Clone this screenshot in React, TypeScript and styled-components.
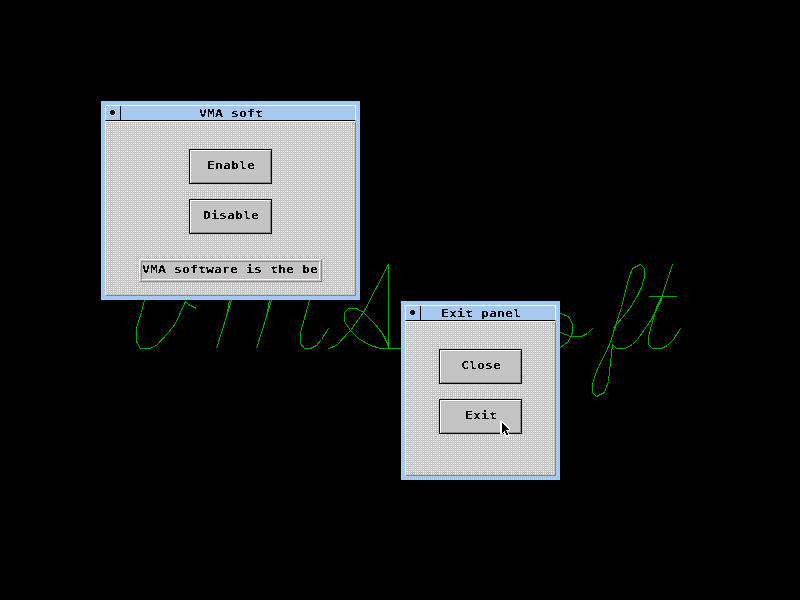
import React from "react";
import styled, { createGlobalStyle } from "styled-components";

const Global = createGlobalStyle`
  * { box-sizing: border-box; }
  body { margin: 0; background: #000; overflow: hidden; }
`;

const Desktop = styled.main`
  position: relative;
  width: 800px;
  height: 600px;
  background: #000;
  color: #000;
  font: bold 10px/12px "DejaVu Sans Mono", monospace;
  cursor: default;
`;

const Wallpaper = styled.svg`
  position: absolute;
  inset: 0;
  fill: none;
  stroke: #00aa00;
  shape-rendering: crispEdges;
`;

const Window = styled.section<{ $x: number; $y: number; $w: number; $h: number }>`
  position: absolute;
  left: ${(p) => p.$x}px;
  top: ${(p) => p.$y}px;
  width: ${(p) => p.$w}px;
  height: ${(p) => p.$h}px;
  padding: 4px;
  background: #a4caf2;
  display: flex;
  flex-direction: column;
`;

const TitleBar = styled.header`
  height: 16px;
  flex: none;
  display: flex;
  border: 1px solid #fff;
  border-bottom: 1px solid #000;
`;

const SystemButton = styled.button`
  width: 15px;
  padding: 4px 0 0 4px;
  border: 0;
  border-right: 1px solid #000;
  background: none;
  display: flex;
  align-items: flex-start;
`;

const Title = styled.h1`
  flex: 1;
  margin: 0 0 0 -14px;
  padding-top: 2px;
  font: inherit;
  display: flex;
  justify-content: center;
`;

const Body = styled.div`
  flex: 1;
  display: flex;
  flex-direction: column;
  align-items: center;
  padding-top: 27px;
  border: 1px solid #fff;
  border-right-color: #868686;
  border-bottom-color: #868686;
  background: conic-gradient(#c3c3c3 25%, #fff 0 50%, #c3c3c3 0) 0 0 / 2px 2px;
`;

const PushButton = styled.button`
  width: 83px;
  height: 35px;
  margin-bottom: 15px;
  padding: 0 0 2px 1px;
  border: 1px solid #000;
  background: #c3c3c3;
  box-shadow: inset 1px 1px #fff, inset -1px -1px #868686;
  color: #000;
  font: inherit;
  display: flex;
  align-items: center;
  justify-content: center;
`;

const Field = styled.div`
  width: 183px;
  height: 23px;
  margin: 10px 0 0;
  padding: 1px;
  border: 1px solid #fff;
  border-right-color: #868686;
  border-bottom-color: #868686;
  background: #c3c3c3;
`;

const FieldText = styled.div`
  height: 19px;
  padding: 2px 0 0;
  border: 1px solid #868686;
  border-right-color: #fff;
  border-bottom-color: #fff;
  display: flex;
`;

const Glyphs = styled.span<{ $fromLeft?: boolean }>`
  display: block;
  white-space: pre;
  transform: scaleX(1.329);
  transform-origin: ${(p) => (p.$fromLeft ? "left" : "center")};
  filter: url(#crisp);
`;

const Pointer = styled.svg`
  position: absolute;
  left: 500px;
  top: 421px;
  shape-rendering: crispEdges;
`;

function Panel(props: {
  title: string; x: number; y: number; w: number; h: number; children: React.ReactNode;
}) {
  return (
    <Window $x={props.x} $y={props.y} $w={props.w} $h={props.h}>
      <TitleBar>
        <SystemButton aria-label="Window menu">
          <svg width="5" height="5" shapeRendering="crispEdges">
            <path d="M1 0h3v1h1v3h-1v1h-3v-1h-1v-3h1z" />
          </svg>
        </SystemButton>
        <Title><Glyphs>{props.title}</Glyphs></Title>
      </TitleBar>
      <Body>{props.children}</Body>
    </Window>
  );
}

const strokes = [
  "144,300 141,312 136,327 136,341 140,348 149,348 156,345 168,332 175,323 185,301 188,304 196,308",
  "231,300 216,348", "229,300 226,317",
  "271,300 256,348", "269,300 266,317",
  "309,300 300,332 300,343 304,348 310,348 316,345 321,339 328,328",
  "328,348 336,345 350,330 363,312 388,264 388,348 387,343 382,333 374,323 363,312 356,308 348,308 344,312 344,321 350,330 358,338 370,345 380,348 401,348",
  "560,313 568,316 572,323 572,332 568,341 560,347",
  "560,332 570,336 581,336 587,333 592,328",
  "612,328 617,323 630,307 636,297 641,287 644,277 644,268 640,264 632,268 628,279 621,307 609,344 596,371 592,383 592,392 596,396 604,392 608,381 609,371 612,344 616,348 625,348 632,344 637,339 651,319 661,299",
  "672,264 661,297 656,307 648,336 648,344 652,348 661,348 667,345 673,339 680,328",
  "648,296 676,296",
];

export default function App() {
  return (
    <Desktop>
      <Global />
      <Wallpaper width="800" height="600">
        <defs>
          <filter id="crisp" x="0" y="0" width="1" height="1">
            <feComponentTransfer>
              <feFuncA type="discrete" tableValues="0 1" />
            </feComponentTransfer>
          </filter>
        </defs>
        <g transform="translate(.5 .5)">
          {strokes.map((points) => <polyline key={points} points={points} />)}
        </g>
      </Wallpaper>
      <Panel title="VMA soft" x={101} y={101} w={259} h={199}>
        <PushButton><Glyphs>Enable</Glyphs></PushButton>
        <PushButton><Glyphs>Disable</Glyphs></PushButton>
        <Field><FieldText><Glyphs $fromLeft>VMA software is the be</Glyphs></FieldText></Field>
      </Panel>
      <Panel title="Exit panel" x={401} y={301} w={159} h={179}>
        <PushButton><Glyphs>Close</Glyphs></PushButton>
        <PushButton><Glyphs>Exit</Glyphs></PushButton>
      </Panel>
      <Pointer width="11" height="17">
        <path fill="#fff" d="M0 0h3v1h1v1h1v1h1v1h1v1h1v1h1v1h1v3h-2v2h1v4h-4v-2h-1v-2h-1v1h-3z" />
        <path d="M2 2h1v1h1v1h1v1h1v1h1v1h1v1h1v1h-3v1h1v2h1v2h-2v-2h-1v-2h-1v1h-1v1h-1z" />
      </Pointer>
    </Desktop>
  );
}
